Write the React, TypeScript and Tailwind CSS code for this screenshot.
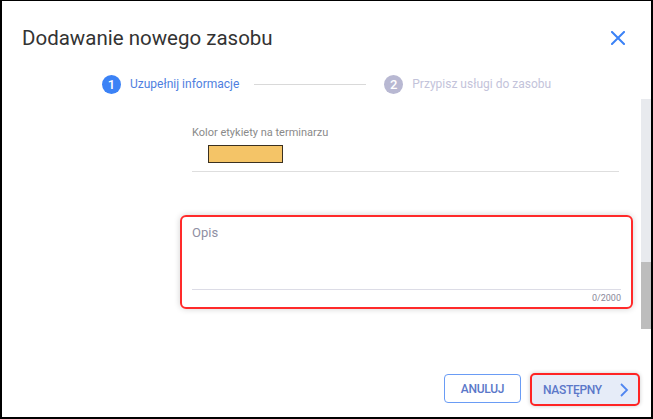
import React from "react";

export default function App() {
  return (
    <div className="w-[653px] h-[419px] bg-white border-2 border-t border-black flex flex-col overflow-hidden" style={{ fontFamily: "Roboto, 'Liberation Sans', sans-serif" }}>
      {/* Header */}
      <div className="flex items-center justify-between pl-[20px] pr-[26px] pt-[22px] h-[52px]">
        <h1 className="text-[20.5px] leading-[28px] text-[#333333] font-normal">Dodawanie nowego zasobu</h1>
        <svg width="14" height="14" viewBox="0 0 14 14">
          <path d="M1 1L13 13M13 1L1 13" stroke="#3b82f6" strokeWidth="2" strokeLinecap="square" />
        </svg>
      </div>
      {/* Stepper */}
      <div className="flex items-start h-[46px] pt-[22px] pl-[100px]">
        <div className="w-[19px] h-[19px] rounded-full bg-[#3b82f6] text-white text-[13px] font-medium flex items-center justify-center">1</div>
        <span className="ml-[9px] text-[12px] leading-[19px] text-[#4f7fe0]">Uzupełnij informacje</span>
        <div className="ml-[15px] mt-[9px] w-[112px] h-px bg-[#d9d9d9]" />
        <div className="ml-[18px] w-[19px] h-[19px] rounded-full bg-[#b8b8d2] text-white text-[13px] font-medium flex items-center justify-center">2</div>
        <span className="ml-[9px] text-[12px] leading-[19px] text-[#c3c3da]">Przypisz usługi do zasobu</span>
      </div>
      {/* Body */}
      <div className="flex h-[230px]">
        <div className="flex-1 pl-[178px] pr-[8px]">
          <div className="pl-[12px] pr-[14px] pt-[27px]">
            <div className="text-[11px] leading-[13px] text-[#8a8a8a]">Kolor etykiety na terminarzu</div>
            <div className="ml-[16px] mt-[6px] w-[75px] h-[18px] bg-[#f4c467] border border-[#3a3020]" />
            <div className="mt-[8px] h-px bg-[#dedede]" />
          </div>
          <div className="mt-[43px] h-[94px] rounded-[6px] border-2 border-[#ff2a2a] shadow-[0_0_6px_rgba(0,0,0,0.18)] px-[10px] pt-[8px] flex flex-col">
            <div className="text-[13px] leading-[16px] text-[#8f8fa3]">Opis</div>
            <div className="flex-1" />
            <div className="h-px bg-[#dcdce6]" />
            <div className="text-right text-[9px] leading-[17px] text-[#8a8a9a]">0/2000</div>
          </div>
        </div>
        <div className="w-[10px] bg-[#e8eaee] flex flex-col justify-end">
          <div className="h-[67px] bg-[#bdbdbd]" />
        </div>
      </div>
      {/* Footer */}
      <div className="flex-1 flex items-end justify-end pr-[11px] pb-[11px] gap-[9px]">
        <button className="mb-[3px] w-[77px] h-[29px] rounded-[4px] border border-[#6a9cf5] text-[12px] font-medium text-[#5b78c9] tracking-tight">ANULUJ</button>
        <button className="w-[110px] h-[33px] rounded-[5px] border-2 border-[#ff2424] bg-[#e6ecf8] shadow-[0_0_4px_rgba(0,0,0,0.2)] flex items-center pl-[11px] pr-[9px]">
          <span className="text-[12px] font-medium text-[#5b78c9] tracking-tight">NASTĘPNY</span>
          <svg width="10" height="16" viewBox="0 0 10 16" className="ml-auto">
            <path d="M2 2L8 8L2 14" stroke="#4f85f0" strokeWidth="1.8" fill="none" />
          </svg>
        </button>
      </div>
    </div>
  );
}
